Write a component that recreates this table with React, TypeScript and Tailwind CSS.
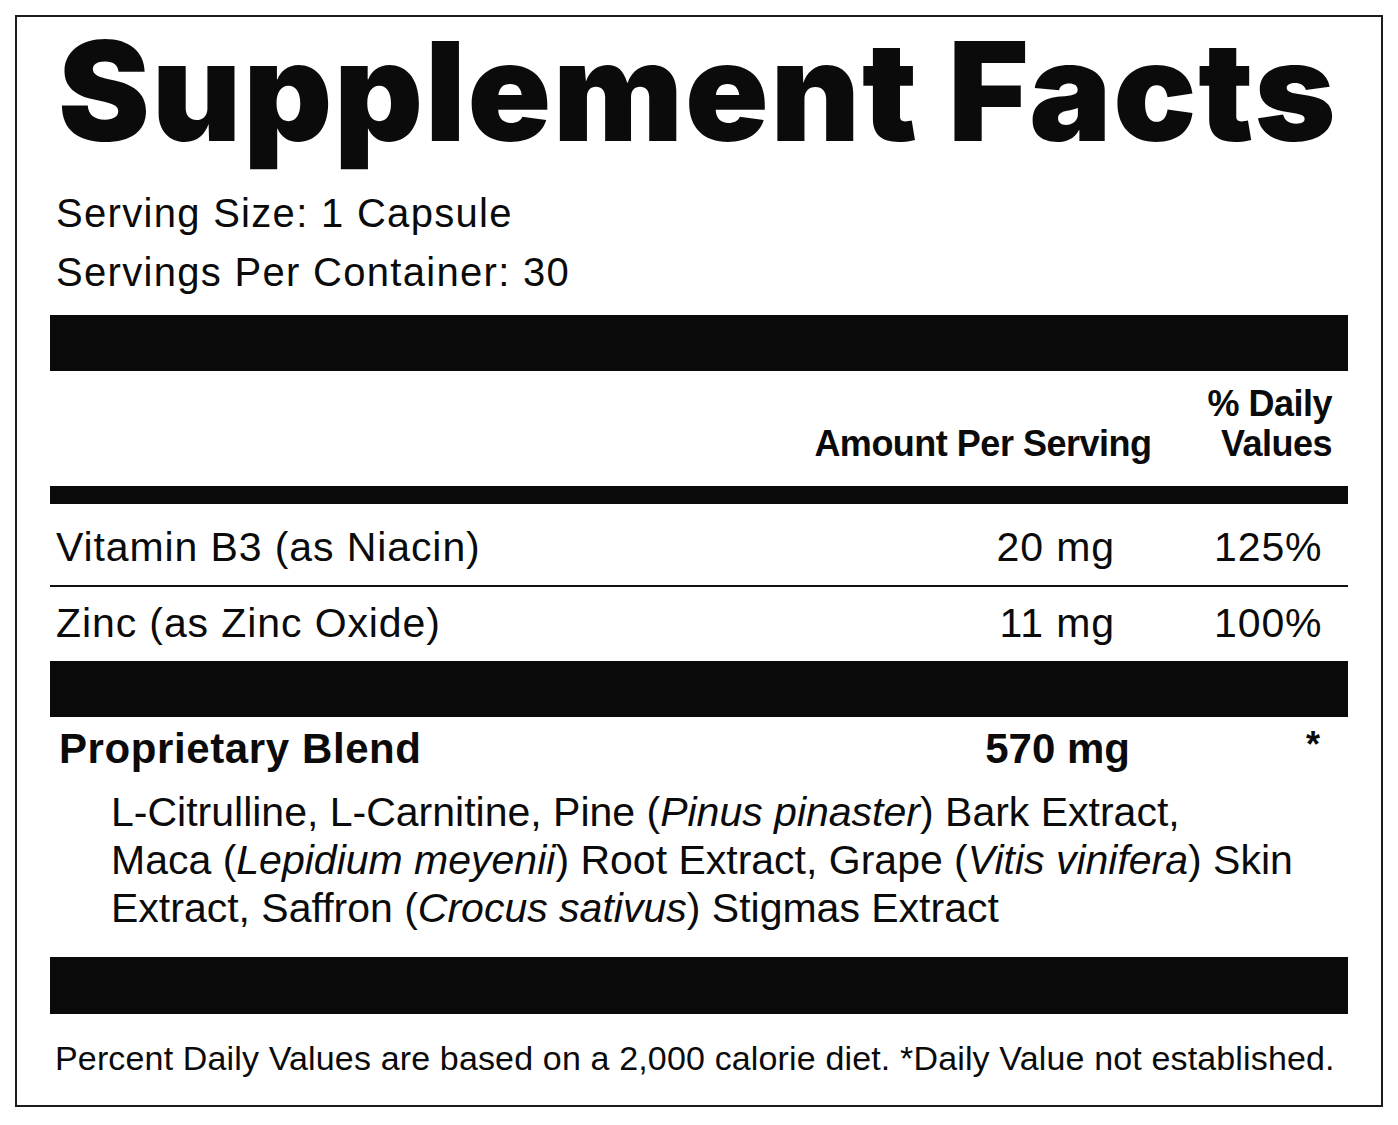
const sans = { fontFamily: '"Liberation Sans", Arial, Helvetica, sans-serif' };

function Bar({ h }: { h: string }) {
  return <div className={`${h} w-full bg-[#0a0a0b]`} />;
}

export default function App() {
  return (
    <div className="w-[1398px] h-[1125px] bg-white pt-[15px] pl-[15px]" style={sans}>
      <div className="w-[1368px] h-[1092px] border-2 border-[#1c1c1c] px-[33px] text-[#0b0b0b]">
        {/* Title */}
        <h1 className="h-[158px] pt-[5px] pl-[8px] font-['Inter',sans-serif] text-[138px] leading-none font-black tracking-[1.8px] whitespace-nowrap">
          Supplement Facts
        </h1>

        <div className="pt-[9px] pl-[6px] text-[40px] leading-[59px] tracking-[1.3px]">
          <p>Serving Size: 1 Capsule</p>
          <p>Servings Per Container: 30</p>
        </div>

        <div className="mt-[13px]">
          <Bar h="h-[56px]" />
        </div>

        {/* Column headers */}
        <div className="h-[115px] flex items-end pb-[22px] font-bold text-[36px] leading-[40px] tracking-[-0.5px]">
          <div className="flex-1" />
          <div className="pr-[56px]">Amount Per Serving</div>
          <div className="text-right pr-[16px]">
            % Daily
            <br />
            Values
          </div>
        </div>

        <Bar h="h-[18px]" />

        {/* Nutrient rows */}
        <div className="h-[83px] flex items-center text-[41px] tracking-[0.9px] border-b-2 border-[#111]">
          <div className="flex-1 pl-[6px] pt-[6px]">Vitamin B3 (as Niacin)</div>
          <div className="pr-[99px] pt-[6px]">20 mg</div>
          <div className="w-[134px] pr-[35px] pt-[6px] text-right">125%</div>
        </div>
        <div className="h-[74px] flex items-center text-[41px] tracking-[0.9px]">
          <div className="flex-1 pl-[6px]">Zinc (as Zinc Oxide)</div>
          <div className="pr-[99px]">11 mg</div>
          <div className="w-[134px] pr-[35px] text-right">100%</div>
        </div>

        <Bar h="h-[56px]" />

        {/* Proprietary blend */}
        <div className="h-[240px]">
          <div className="flex items-start pt-[10px]">
            <div className="flex-1 pl-[9px] font-bold text-[42px] leading-[44px] tracking-[0.6px]">Proprietary Blend</div>
            <div className="pr-[88px] font-bold text-[42px] leading-[44px]">570 mg</div>
            <div className="w-[130px] pr-[28px] text-right font-bold text-[36px] leading-[36px]">*</div>
          </div>
          <p className="mt-[17px] pl-[61px] pr-[40px] text-[41px] leading-[48px]">
            L-Citrulline, L-Carnitine, Pine (<i>Pinus pinaster</i>) Bark Extract,
            <br />
            Maca (<i>Lepidium meyenii</i>) Root Extract, Grape (<i>Vitis vinifera</i>) Skin
            <br />
            Extract, Saffron (<i>Crocus sativus</i>) Stigmas Extract
          </p>
        </div>

        <Bar h="h-[57px]" />

        {/* Footnote */}
        <p className="pt-[24px] pl-[5px] text-[34px] leading-[40px] tracking-[0.15px] whitespace-nowrap">
          Percent Daily Values are based on a 2,000 calorie diet. *Daily Value not established.
        </p>
      </div>
    </div>
  );
}
